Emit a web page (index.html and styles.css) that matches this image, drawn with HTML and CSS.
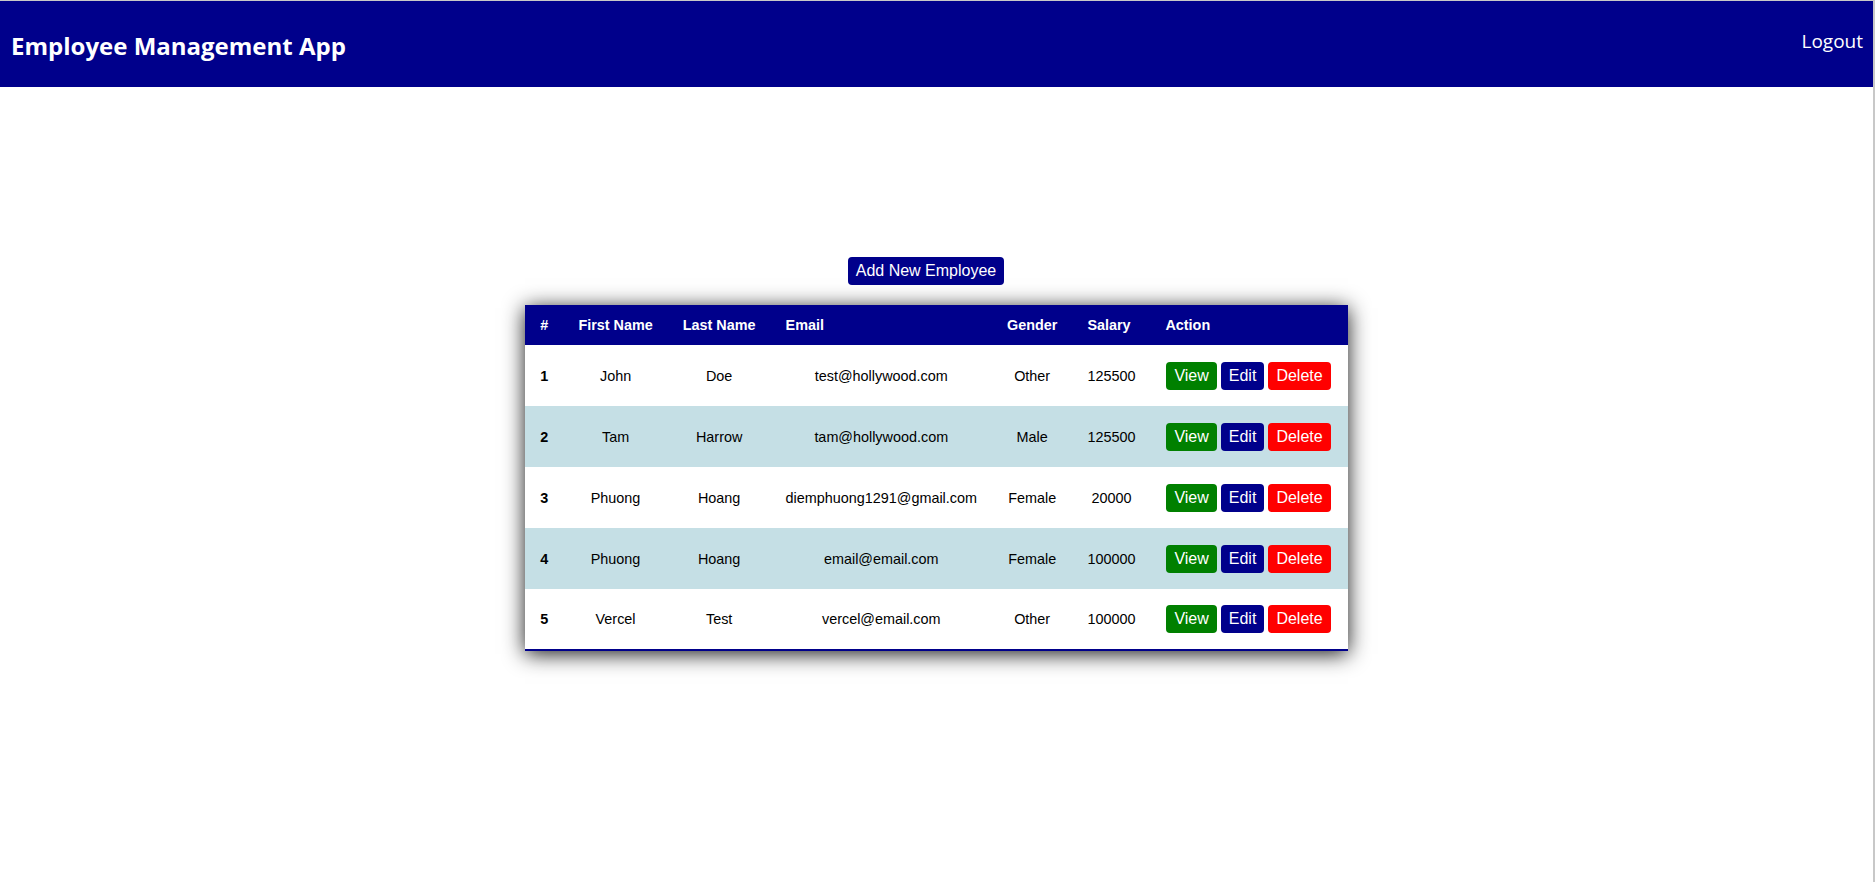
FILE: index.html
```html
<!DOCTYPE html>
<html lang="en">
<head>
<meta charset="utf-8">
<title>Employee Management App</title>
<link rel="stylesheet" href="styles.css">
</head>
<body>
<div class="frame">
  <header class="navbar">
    <h1 class="brand">Employee Management App</h1>
    <a class="logout" href="#">Logout</a>
  </header>
  <main class="content">
    <div class="toolbar">
      <button class="btn btn-blue">Add New Employee</button>
    </div>
    <div class="table-wrap">
      <table class="emp-table">
        <thead>
          <tr>
            <th>#</th>
            <th>First Name</th>
            <th>Last Name</th>
            <th>Email</th>
            <th>Gender</th>
            <th>Salary</th>
            <th>Action</th>
          </tr>
        </thead>
        <tbody>
          <tr>
            <td class="idx">1</td><td>John</td><td>Doe</td><td>test@hollywood.com</td><td>Other</td><td>125500</td>
            <td class="actions"><button class="btn btn-green">View</button> <button class="btn btn-blue">Edit</button> <button class="btn btn-red">Delete</button></td>
          </tr>
          <tr>
            <td class="idx">2</td><td>Tam</td><td>Harrow</td><td>tam@hollywood.com</td><td>Male</td><td>125500</td>
            <td class="actions"><button class="btn btn-green">View</button> <button class="btn btn-blue">Edit</button> <button class="btn btn-red">Delete</button></td>
          </tr>
          <tr>
            <td class="idx">3</td><td>Phuong</td><td>Hoang</td><td>diemphuong1291@gmail.com</td><td>Female</td><td>20000</td>
            <td class="actions"><button class="btn btn-green">View</button> <button class="btn btn-blue">Edit</button> <button class="btn btn-red">Delete</button></td>
          </tr>
          <tr>
            <td class="idx">4</td><td>Phuong</td><td>Hoang</td><td>email@email.com</td><td>Female</td><td>100000</td>
            <td class="actions"><button class="btn btn-green">View</button> <button class="btn btn-blue">Edit</button> <button class="btn btn-red">Delete</button></td>
          </tr>
          <tr>
            <td class="idx">5</td><td>Vercel</td><td>Test</td><td>vercel@email.com</td><td>Other</td><td>100000</td>
            <td class="actions"><button class="btn btn-green">View</button> <button class="btn btn-blue">Edit</button> <button class="btn btn-red">Delete</button></td>
          </tr>
        </tbody>
      </table>
    </div>
  </main>
</div>
</body>
</html>
```
FILE: styles.css
```css
* { box-sizing: border-box; }

html, body {
  margin: 0;
  padding: 0;
  height: 100%;
  background: #ffffff;
}

body {
  font-family: "Liberation Sans", Arial, sans-serif;
  color: #000;
}

.frame {
  min-height: 100%;
  border-top: 1px solid #c8c8c8;
  border-right: 2px solid #c8c8c8;
}

.navbar {
  background: #00008b;
  height: 86px;
  display: flex;
  justify-content: space-between;
  align-items: flex-start;
  padding: 0 10px 0 11px;
}

.brand {
  margin: 0;
  padding-top: 3px;
  font-family: "Open Sans", "Noto Sans", sans-serif;
  font-weight: 700;
  font-size: 24px;
  line-height: 83px;
  color: #ffffff;
}

.logout {
  margin-top: 27px;
  font-family: "Open Sans", "Noto Sans", sans-serif;
  font-size: 19px;
  color: #ffffff;
  text-decoration: none;
}

.content {
  padding-top: 170px;
}

.toolbar {
  text-align: center;
  padding-right: 21px;
  margin-bottom: 20px;
}

.btn {
  font-family: "Liberation Sans", Arial, sans-serif;
  font-size: 16px;
  line-height: 18px;
  color: #ffffff;
  border: none;
  border-radius: 4px;
  padding: 5px 8px;
  cursor: pointer;
}

.btn-blue { background: #00008b; }
.btn-green { background: #008000; }
.btn-red { background: #ff0000; }

.table-wrap {
  display: flex;
  justify-content: center;
}

.emp-table {
  border-collapse: collapse;
  font-size: 14.4px;
  box-shadow: 0 3px 20px rgba(0, 0, 0, 0.9);
  border-bottom: 2px solid #00008b;
}

.emp-table thead tr {
  background: #00008b;
  color: #ffffff;
}

.emp-table th {
  text-align: left;
  font-weight: 700;
  padding: 0 15px;
  height: 40px;
}

.emp-table td {
  text-align: center;
  padding: 16px 15px;
  height: 61px;
}

.emp-table td.idx {
  font-weight: 700;
  text-align: left;
}

.emp-table tbody tr:nth-child(even) {
  background: #c5dfe5;
}

.emp-table td.actions {
  white-space: nowrap;
  padding-left: 16px;
  padding-right: 17px;
}
```
